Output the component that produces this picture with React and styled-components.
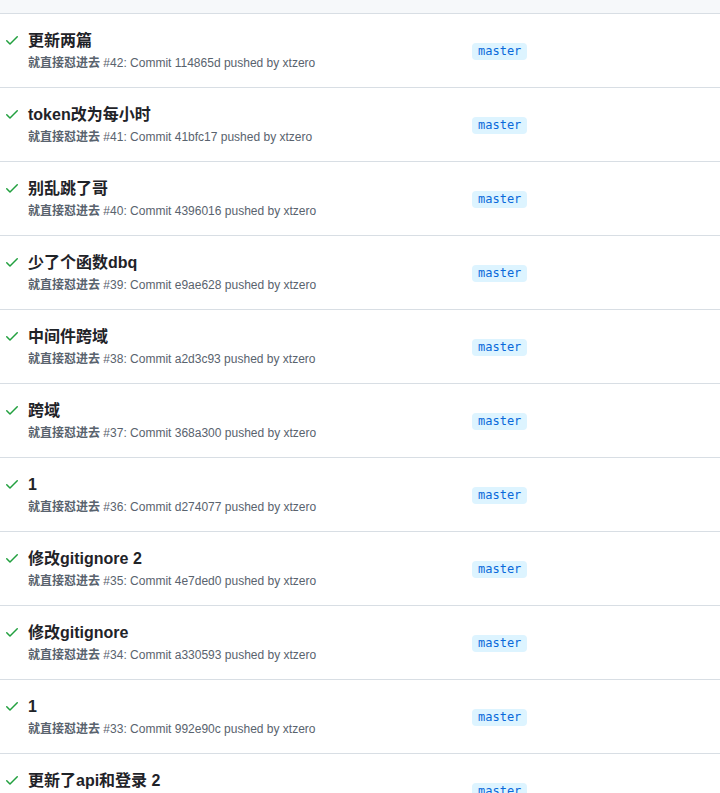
import React from "react";
import styled, { createGlobalStyle } from "styled-components";

const Global = createGlobalStyle`
  html, body { margin: 0; padding: 0; background: #ffffff; }
  body {
    font-family: "Liberation Sans", "Noto Sans CJK SC", sans-serif;
    color: #1f2328;
    overflow: hidden;
  }
`;

const Page = styled.div`
  width: 720px;
  height: 793px;
  overflow: hidden;
`;

const HeaderBand = styled.div`
  height: 13px;
  background: #f6f8fa;
  border-bottom: 1px solid #d8dee4;
`;

const List = styled.div`
  display: flex;
  flex-direction: column;
`;

const Row = styled.div`
  display: grid;
  grid-template-columns: 16px 436px auto;
  column-gap: 8px;
  align-items: start;
  padding-left: 4px;
  border-bottom: 1px solid #d8dee4;
  box-sizing: border-box;
  height: 74px;
`;

const IconCell = styled.div`
  padding-top: 18px;
  display: flex;
  color: #22a03f;
`;

const TextCell = styled.div`
  display: flex;
  flex-direction: column;
  gap: 1px;
  padding-top: 15px;
  min-width: 0;
`;

const Title = styled.div`
  font-size: 16px;
  font-weight: 700;
  line-height: 24px;
  color: #1f2328;
  white-space: nowrap;
`;

const Meta = styled.div`
  font-size: 12px;
  line-height: 18px;
  color: #59636e;
  white-space: nowrap;
`;

const Workflow = styled.span`
  font-weight: 600;
`;

const Branch = styled.span`
  justify-self: start;
  margin-top: 29px;
  font-family: "DejaVu Sans Mono", "Liberation Mono", monospace;
  font-size: 12px;
  line-height: 17px;
  padding: 0 6px;
  border-radius: 4px;
  color: #0969da;
  background: #ddf4ff;
`;

const CheckIcon = () => (
  <svg width="16" height="16" viewBox="0 0 16 16" fill="currentColor">
    <path d="M13.78 4.22a.75.75 0 0 1 0 1.06l-7.25 7.25a.75.75 0 0 1-1.06 0L2.22 9.28a.751.751 0 0 1 .018-1.042.751.751 0 0 1 1.042-.018L6 10.94l6.72-6.72a.75.75 0 0 1 1.06 0Z" />
  </svg>
);

const runs = [
  { title: "更新两篇", num: 42, sha: "114865d" },
  { title: "token改为每小时", num: 41, sha: "41bfc17" },
  { title: "别乱跳了哥", num: 40, sha: "4396016" },
  { title: "少了个函数dbq", num: 39, sha: "e9ae628" },
  { title: "中间件跨域", num: 38, sha: "a2d3c93" },
  { title: "跨域", num: 37, sha: "368a300" },
  { title: "1", num: 36, sha: "d274077" },
  { title: "修改gitignore 2", num: 35, sha: "4e7ded0" },
  { title: "修改gitignore", num: 34, sha: "a330593" },
  { title: "1", num: 33, sha: "992e90c" },
  { title: "更新了api和登录 2", num: 32, sha: "7c1d2a4" },
];

export default function App() {
  return (
    <Page>
      <Global />
      <HeaderBand />
      <List>
        {runs.map((r) => (
          <Row key={r.num}>
            <IconCell>
              <CheckIcon />
            </IconCell>
            <TextCell>
              <Title>{r.title}</Title>
              <Meta>
                <Workflow>就直接怼进去</Workflow> #{r.num}: Commit {r.sha} pushed by xtzero
              </Meta>
            </TextCell>
            <Branch>master</Branch>
          </Row>
        ))}
      </List>
    </Page>
  );
}
